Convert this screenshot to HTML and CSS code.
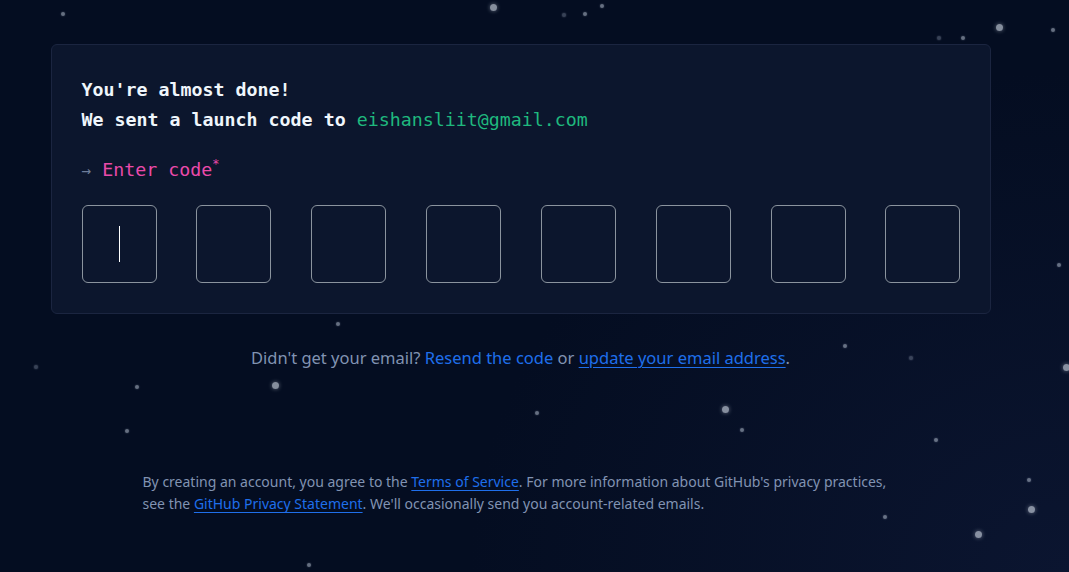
FILE: index.html
```html
<!DOCTYPE html>
<html lang="en">
<head>
<meta charset="utf-8">
<title>Verify your email</title>
<link rel="stylesheet" href="styles.css">
</head>
<body>
<div class="sky" aria-hidden="true">
  <span class="star big" style="left:493px;top:7px"></span>
  <span class="star" style="left:63px;top:14px"></span>
  <span class="star" style="left:602px;top:6px"></span>
  <span class="star" style="left:585px;top:14px"></span>
  <span class="star dim" style="left:564px;top:15px"></span>
  <span class="star big" style="left:999px;top:27px"></span>
  <span class="star" style="left:1053px;top:30px"></span>
  <span class="star dim" style="left:939px;top:38px"></span>
  <span class="star" style="left:963px;top:38px"></span>
  <span class="star" style="left:338px;top:324px"></span>
  <span class="star" style="left:845px;top:346px"></span>
  <span class="star dim" style="left:36px;top:367px"></span>
  <span class="star big" style="left:275px;top:385px"></span>
  <span class="star" style="left:137px;top:387px"></span>
  <span class="star big" style="left:725px;top:409px"></span>
  <span class="star" style="left:537px;top:413px"></span>
  <span class="star" style="left:1059px;top:265px"></span>
  <span class="star dim" style="left:911px;top:358px"></span>
  <span class="star" style="left:936px;top:440px"></span>
  <span class="star" style="left:127px;top:431px"></span>
  <span class="star" style="left:742px;top:430px"></span>
  <span class="star" style="left:885px;top:517px"></span>
  <span class="star big" style="left:978px;top:534px"></span>
  <span class="star" style="left:1029px;top:480px"></span>
  <span class="star" style="left:309px;top:565px"></span>
  <span class="star big" style="left:1066px;top:367px"></span>
  <span class="star big" style="left:1031px;top:509px"></span>
</div>

<main class="page">
  <section class="card">
    <h1 class="title">You're almost done!<br>We sent a launch code to <span class="email">eishansliit@gmail.com</span></h1>
    <div class="label"><span class="arrow">→</span> Enter code<sup class="req">*</sup></div>
    <div class="code-row">
      <div class="cell active"><span class="caret"></span></div>
      <div class="cell"></div>
      <div class="cell"></div>
      <div class="cell"></div>
      <div class="cell"></div>
      <div class="cell"></div>
      <div class="cell"></div>
      <div class="cell"></div>
    </div>
  </section>

  <p class="resend">Didn't get your email? <a class="link plain" href="#">Resend the code</a> or <a class="link" href="#">update your email address</a>.</p>

  <p class="legal">By creating an account, you agree to the <a class="link" href="#">Terms of Service</a>. For more information about GitHub's privacy practices, see the <a class="link" href="#">GitHub Privacy Statement</a>. We'll occasionally send you account-related emails.</p>
</main>
</body>
</html>
```

FILE: styles.css
```css
* { box-sizing: border-box; }

html, body {
  margin: 0;
  height: 100%;
}

body {
  background: radial-gradient(ellipse 600px 500px at 1069px 572px, #0b1530 0%, rgba(4,13,33,0) 100%), #040d21;
  font-family: "Noto Sans", "Liberation Sans", sans-serif;
  color: #8193b2;
  overflow: hidden;
  position: relative;
}

.sky {
  position: absolute;
  inset: 0;
  pointer-events: none;
}

.star {
  position: absolute;
  width: 4px;
  height: 4px;
  margin: -2px 0 0 -2px;
  border-radius: 50%;
  background: rgba(200, 210, 225, 0.5);
  box-shadow: 0 0 2px rgba(200, 210, 225, 0.35);
}

.star.big {
  width: 7px;
  height: 7px;
  margin: -3px 0 0 -3px;
  background: rgba(220, 228, 240, 0.6);
  box-shadow: 0 0 4px rgba(220, 228, 240, 0.45);
}

.star.dim {
  background: rgba(180, 190, 210, 0.3);
}

.page {
  position: relative;
  display: flex;
  flex-direction: column;
  align-items: center;
  padding: 44px 28px 0 0;
}

.card {
  width: 940px;
  background: #0c162d;
  border: 1px solid #1b2540;
  border-radius: 6px;
  padding: 30px 29px 30px 30px;
}

.title {
  margin: 0;
  font-family: "DejaVu Sans Mono", "Liberation Mono", monospace;
  font-size: 18.3px;
  font-weight: bold;
  line-height: 30px;
  color: #f0f6fc;
}

.email {
  color: #1fb87e;
  font-weight: normal;
}

.label {
  margin-top: 20px;
  font-family: "DejaVu Sans Mono", "Liberation Mono", monospace;
  font-size: 18.3px;
  line-height: 30px;
  color: #ea4aaa;
}

.arrow {
  color: #6e7d99;
  font-size: 16px;
}

.req {
  font-size: 12px;
  vertical-align: 8px;
  line-height: 0;
}

.code-row {
  margin-top: 19px;
  display: flex;
  justify-content: space-between;
}

.cell {
  width: 75px;
  height: 78px;
  border: 1px solid #8b949e;
  border-radius: 6px;
  display: flex;
  align-items: center;
  justify-content: center;
}

.caret {
  display: block;
  width: 1px;
  height: 36px;
  background: #ffffff;
  margin-left: 1px;
}

.resend {
  margin: 32px 0 0;
  font-size: 16.5px;
  line-height: 24px;
  color: #8193b2;
}

.link {
  color: #1f6feb;
  text-decoration: underline;
  text-decoration-thickness: 1px;
  text-underline-offset: 3px;
}

.link.plain {
  text-decoration: none;
}

.legal {
  margin: 101px 0 0;
  width: 756px;
  font-size: 14px;
  line-height: 22px;
  color: #8193b2;
}
```
